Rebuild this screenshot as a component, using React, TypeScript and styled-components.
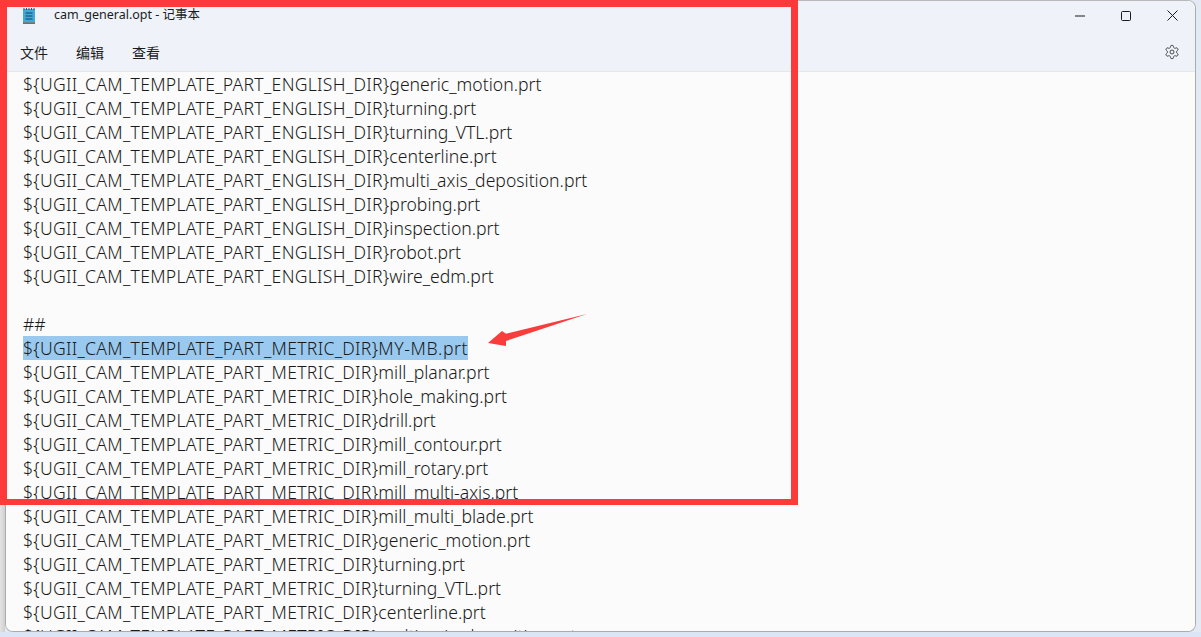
import React from "react";
import styled, { createGlobalStyle } from "styled-components";

const Global = createGlobalStyle`
  html, body { margin: 0; padding: 0; width: 1201px; height: 637px; overflow: hidden; background: #dfe8f6; }
  #root { width: 1201px; height: 637px; }
`;

const Desktop = styled.div`
  position: relative;
  width: 1201px;
  height: 637px;
  overflow: hidden;
  padding: 0 5px 5px 5px;
  box-sizing: border-box;
  background:
    linear-gradient(#dbe5f5, #dbe5f5) left bottom / 100% 5px no-repeat,
    linear-gradient(to right, #e4e4e4, #cfcfcf) left top / 5px 100% no-repeat,
    #e3eaf4;
  font-family: "Noto Sans", "Noto Sans CJK SC", sans-serif;
`;

const Window = styled.div`
  width: 1191px;
  height: 632px;
  display: flex;
  flex-direction: column;
  overflow: hidden;
  border: 1px solid #ababab;
  border-top-color: #b9b9b9;
  border-radius: 8px;
  box-sizing: border-box;
  background: #fbfbfb;
`;

const TitleBar = styled.div`
  height: 29px;
  flex: none;
  display: flex;
  align-items: center;
  padding-left: 16px;
  background: #eff3f9;
`;

const AppIcon = styled.svg`
  width: 14px;
  height: 18px;
  flex: none;
`;

const Title = styled.span`
  margin-left: 18px;
  font-size: 12.5px;
  line-height: 16px;
  margin-bottom: 1px;
  color: #1c1c1c;
`;

const WindowButtons = styled.div`
  margin-left: auto;
  display: flex;
`;

const WindowButton = styled.div`
  width: 46px;
  height: 29px;
  display: flex;
  align-items: center;
  justify-content: center;
`;

const MenuBar = styled.div`
  height: 42px;
  flex: none;
  box-sizing: border-box;
  display: flex;
  align-items: center;
  padding: 3px 15px 0 14px;
  gap: 28px;
  background: #eff3f9;
  border-bottom: 1px solid #e5e7ea;
`;

const MenuItem = styled.span`
  font-size: 14px;
  color: #1b1b1b;
`;

const Settings = styled.svg`
  margin-left: auto;
  width: 16px;
  height: 16px;
`;

const Editor = styled.div`
  flex: 1;
  min-height: 0;
  overflow: hidden;
  padding-left: 17px;
  background: #fbfbfb;
`;

const Line = styled.div`
  height: 24px;
  line-height: 24px;
  font-size: 17.6px;
  font-weight: 300;
  color: #1a1a1a;
  white-space: pre;
`;

const Prefix = styled.span`
  letter-spacing: 0.28px;
`;

const Selected = styled.span`
  display: inline-block;
  height: 24px;
  line-height: 24px;
  background: #99c9ef;
`;

const SelectedName = styled.span`
  letter-spacing: 0.6px;
`;

const RedFrame = styled.div`
  position: absolute;
  left: 0;
  top: 0;
  width: 798px;
  height: 505px;
  box-sizing: border-box;
  border: 7px solid #fd3a3a;
  border-bottom-width: 6px;
  pointer-events: none;
`;

const Arrow = styled.svg`
  position: absolute;
  left: 488px;
  top: 313px;
  width: 100px;
  height: 34px;
`;

const E = "${UGII_CAM_TEMPLATE_PART_ENGLISH_DIR}";
const M = "${UGII_CAM_TEMPLATE_PART_METRIC_DIR}";

const before = ["generic_motion", "turning", "turning_VTL", "centerline", "multi_axis_deposition", "probing", "inspection", "robot", "wire_edm"];
const after = ["mill_planar", "hole_making", "drill", "mill_contour", "mill_rotary", "mill_multi-axis", "mill_multi_blade", "generic_motion", "turning", "turning_VTL", "centerline", "multi_axis_deposition"];

export default function App() {
  return (
    <Desktop>
      <Global />
      <Window>
        <TitleBar>
          <AppIcon viewBox="0 0 14 18">
            <rect x="1" y="2" width="12" height="15" rx="1" fill="#3fa9d8" />
            <rect x="1" y="15.5" width="12" height="1.5" fill="#a5622c" />
            <path d="M2 1v2M4.5 1v2M7 1v2M9.5 1v2M12 1v2" stroke="#28536e" strokeWidth="1" />
            <path d="M3.5 6h7M3.5 9h7M3.5 12h7" stroke="#16406a" strokeWidth="1" />
          </AppIcon>
          <Title>cam_general.opt - 记事本</Title>
          <WindowButtons>
            <WindowButton>
              <svg width="10" height="10" viewBox="0 0 10 10"><path d="M0 5h10" stroke="#1b1b1b" strokeWidth="1" /></svg>
            </WindowButton>
            <WindowButton>
              <svg width="10" height="10" viewBox="0 0 10 10"><rect x="0.5" y="0.5" width="9" height="9" rx="1" fill="none" stroke="#1b1b1b" /></svg>
            </WindowButton>
            <WindowButton>
              <svg width="11" height="11" viewBox="0 0 11 11"><path d="M.5.5l10 10M10.5.5l-10 10" stroke="#1b1b1b" strokeWidth="1" /></svg>
            </WindowButton>
          </WindowButtons>
        </TitleBar>
        <MenuBar>
          <MenuItem>文件</MenuItem>
          <MenuItem>编辑</MenuItem>
          <MenuItem>查看</MenuItem>
          <Settings viewBox="0 0 24 24" fill="none" stroke="#3a3a3a" strokeWidth="1.4" strokeLinejoin="round">
            <path d="M12.22 2h-.44a2 2 0 0 0-2 2v.18a2 2 0 0 1-1 1.73l-.43.25a2 2 0 0 1-2 0l-.15-.08a2 2 0 0 0-2.73.73l-.22.38a2 2 0 0 0 .73 2.73l.15.1a2 2 0 0 1 1 1.72v.51a2 2 0 0 1-1 1.74l-.15.09a2 2 0 0 0-.73 2.73l.22.38a2 2 0 0 0 2.73.73l.15-.08a2 2 0 0 1 2 0l.43.25a2 2 0 0 1 1 1.73V20a2 2 0 0 0 2 2h.44a2 2 0 0 0 2-2v-.18a2 2 0 0 1 1-1.73l.43-.25a2 2 0 0 1 2 0l.15.08a2 2 0 0 0 2.73-.73l.22-.39a2 2 0 0 0-.73-2.73l-.15-.08a2 2 0 0 1-1-1.74v-.5a2 2 0 0 1 1-1.74l.15-.09a2 2 0 0 0 .73-2.73l-.22-.38a2 2 0 0 0-2.73-.73l-.15.08a2 2 0 0 1-2 0l-.43-.25a2 2 0 0 1-1-1.73V4a2 2 0 0 0-2-2z" />
            <circle cx="12" cy="12" r="3" />
          </Settings>
        </MenuBar>
        <Editor>
          {before.map((n) => (
            <Line key={n}><Prefix>{E}</Prefix>{n}.prt</Line>
          ))}
          <Line> </Line>
          <Line>##</Line>
          <Line><Selected><Prefix>{M}</Prefix><SelectedName>MY-MB.prt</SelectedName></Selected></Line>
          {after.map((n) => (
            <Line key={n}><Prefix>{M}</Prefix>{n}.prt</Line>
          ))}
        </Editor>
      </Window>
      <RedFrame />
      <Arrow viewBox="0 0 100 34">
        <path d="M99 1 L18 20.7 L14 18 L0 30 L18 33 L18 28 Z" fill="#f93c3c" />
      </Arrow>
    </Desktop>
  );
}
